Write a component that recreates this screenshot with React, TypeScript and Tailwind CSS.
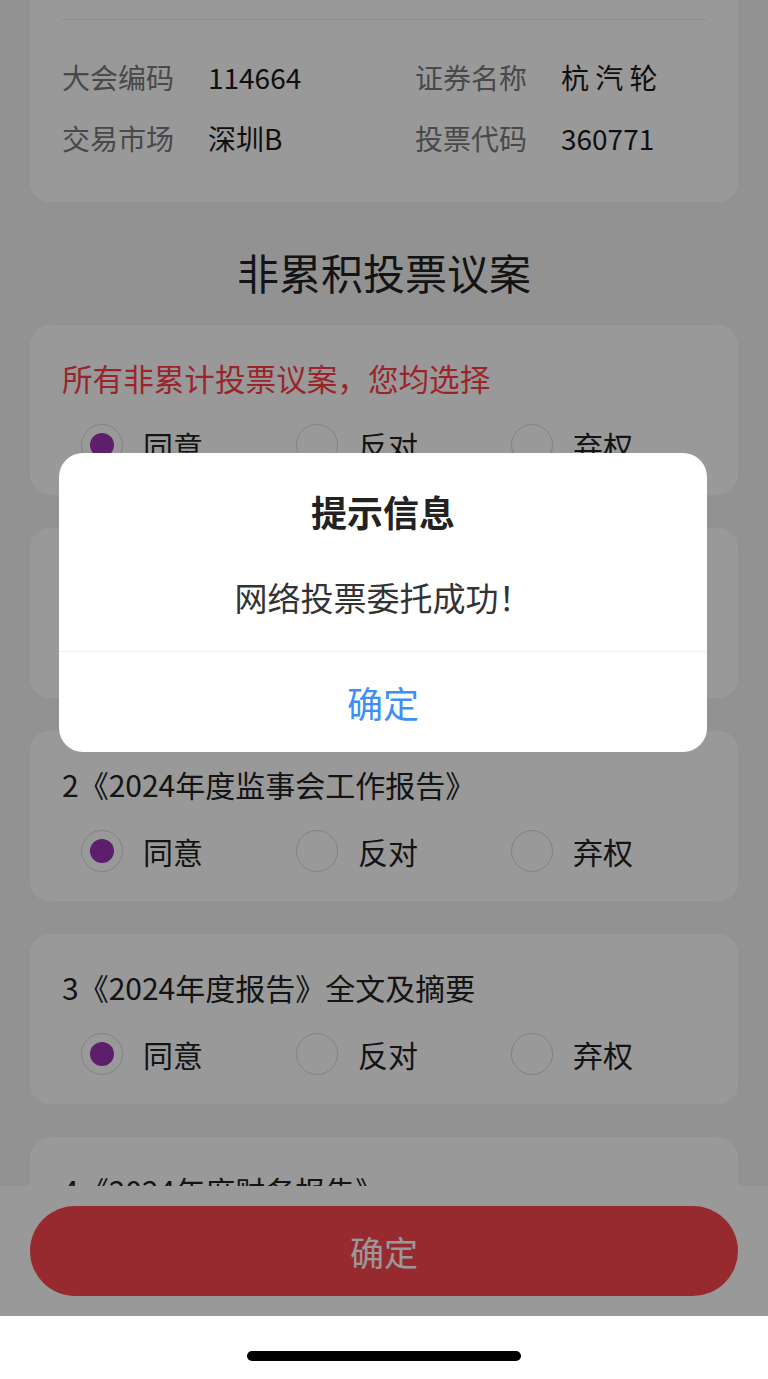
import React from 'react'

const infoRows = [
	[ { label: '大会编码', value: '114664' }, { label: '证券名称', value: '杭 汽 轮' } ],
	[ { label: '交易市场', value: '深圳B' }, { label: '投票代码', value: '360771' } ],
]

const proposals = [
	{ title: '1《2024年度董事会工作报告》', choice: 0 },
	{ title: '2《2024年度监事会工作报告》', choice: 0 },
	{ title: '3《2024年度报告》全文及摘要', choice: 0 },
	{ title: '4《2024年度财务报告》', choice: 0 },
]

const options = [ '同意', '反对', '弃权' ]

function RadioRow({ checked }: { checked: number }) {
	return (
		<div className="mt-[26px] flex h-[42px] items-center pl-[19px]">
			{options.map((opt, i) => (
				<div key={opt} className="flex w-[215px] shrink-0 items-center gap-[20px]">
					<span className="flex h-[42px] w-[42px] shrink-0 items-center justify-center rounded-full border border-[#d9d9d9] bg-white">
						{checked === i && <span className="h-[24px] w-[24px] rounded-full bg-[#9b32b2]" />}
					</span>
					<span className="text-[30px] leading-[40px] text-[#222]">{opt}</span>
				</div>
			))}
		</div>
	)
}

function ProposalCard({ title, checked, red }: { title: string; checked: number; red?: boolean }) {
	return (
		<div className="mx-[30px] h-[170px] rounded-[20px] bg-white px-[32px] pt-[33px]">
			<p className={`leading-[40px] whitespace-nowrap ${red ? 'text-[30.6px] text-[#ff3f48]' : 'text-[30px] text-[#222]'}`}>{title}</p>
			<RadioRow checked={checked} />
		</div>
	)
}

export default function App() {
	return (
		<div className="relative h-[1379px] w-[768px] overflow-hidden bg-white font-['Noto_Sans_CJK_SC',sans-serif]">
			<div className="relative h-[1316px] overflow-hidden bg-[#f4f4f6]">
				{/* meeting info card (scrolled, top cut off) */}
				<div className="mx-[30px] rounded-b-[20px] bg-white px-[32px] pt-[19px] pb-[34px]">
					<div className="h-px bg-[#ececec]" />
					<div className="mt-[26px]">
						{infoRows.map((row, r) => (
							<div key={r} className="flex h-[61px] items-center">
								{row.map((cell, c) => (
									<div key={cell.label} className={`flex items-center ${c === 0 ? 'w-[353px]' : ''}`}>
										<span className="w-[146px] text-[28px] leading-[40px] text-[#7a7a7a]">{cell.label}</span>
										<span className="text-[28px] leading-[40px] text-[#1a1a1a]">{cell.value}</span>
									</div>
								))}
							</div>
						))}
					</div>
				</div>

				<h2 className="mt-[42px] mb-[25px] text-center text-[42px] leading-[56px] font-normal text-[#222]">非累积投票议案</h2>

				<div className="flex flex-col gap-[33px]">
					<ProposalCard title="所有非累计投票议案，您均选择" checked={0} red />
					{proposals.map((p) => (
						<ProposalCard key={p.title} title={p.title} checked={p.choice} />
					))}
				</div>

				{/* fixed submit bar */}
				<div className="absolute inset-x-0 bottom-0 bg-white px-[30px] py-[20px]">
					<button className="flex h-[90px] w-full items-center justify-center rounded-full bg-[#fc464e] text-[34px] text-white">
						确定
					</button>
				</div>

				{/* mask */}
				<div className="absolute inset-0 bg-black/40" />

				{/* alert dialog */}
				<div className="absolute top-[453px] left-[59px] w-[648px] overflow-hidden rounded-[24px] bg-white">
					<div className="px-[40px] pt-[33px] pb-[32px] text-center">
						<h3 className="text-[36px] leading-[50px] font-bold text-[#222]">提示信息</h3>
						<p className="mt-[39px] text-[33px] leading-[44px] text-[#333]">网络投票委托成功！</p>
					</div>
					<div className="h-px bg-[#efefef]" />
					<button className="flex h-[100px] w-full items-center justify-center text-[36px] text-[#3e8ef7]">确定</button>
				</div>
			</div>

			{/* home indicator */}
			<div className="flex h-[63px] justify-center pt-[35px]">
				<div className="h-[10px] w-[274px] rounded-full bg-black" />
			</div>
		</div>
	)
}
